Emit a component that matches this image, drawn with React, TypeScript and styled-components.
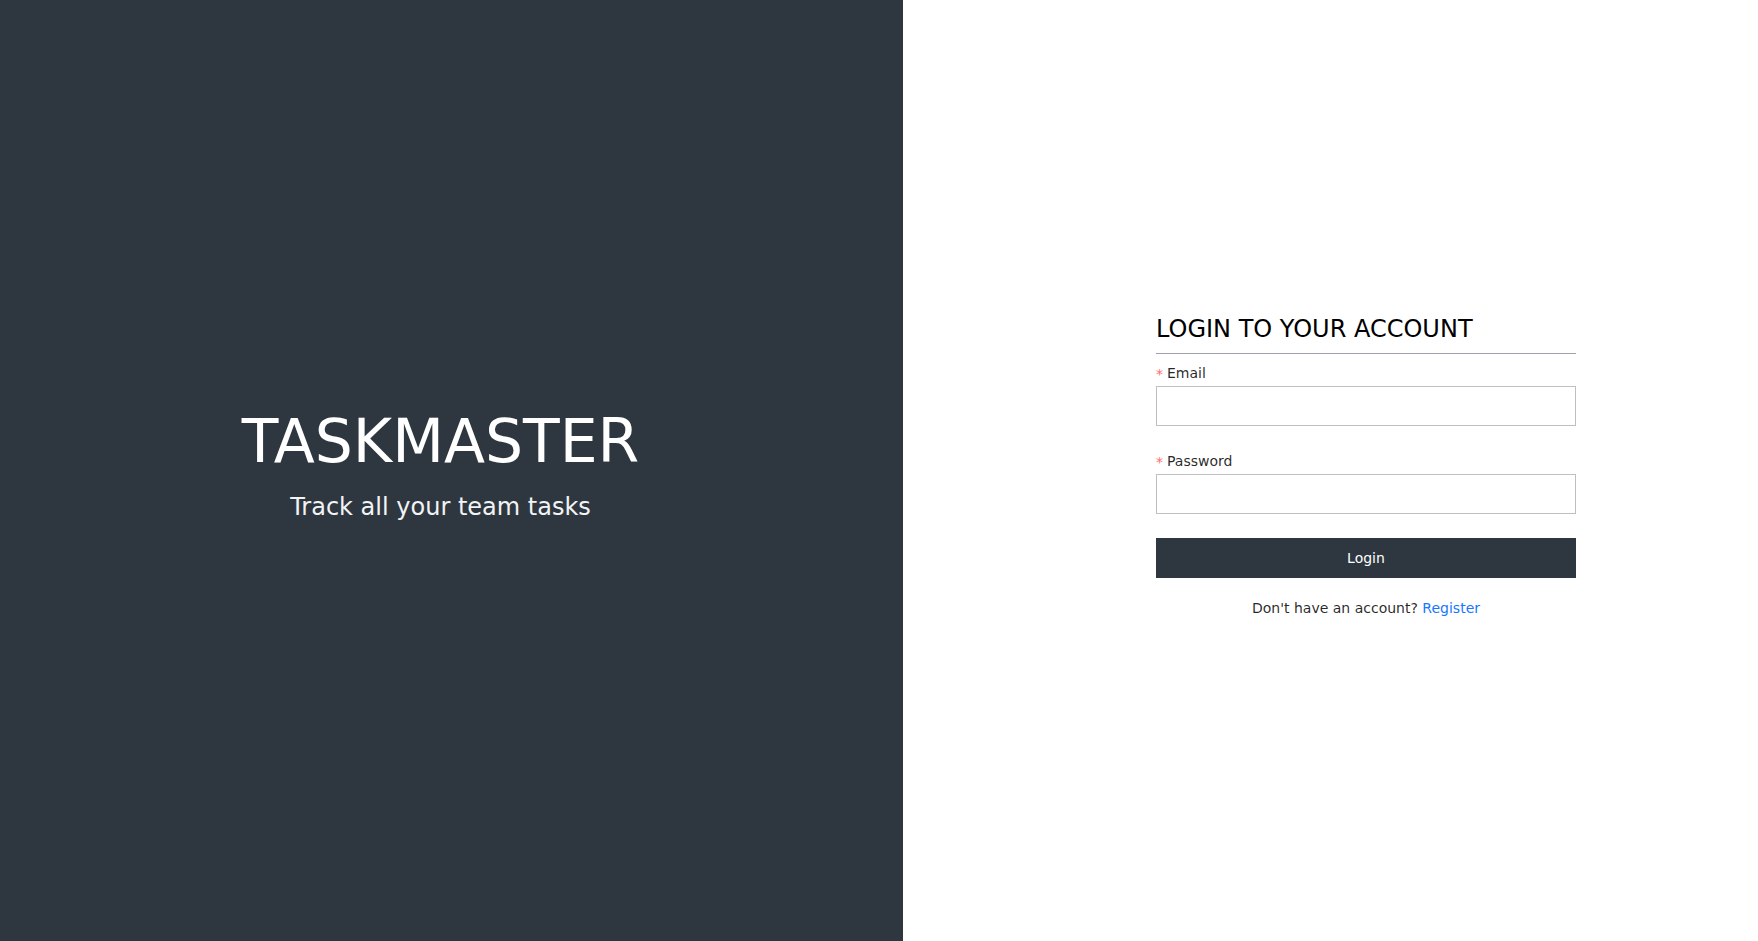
import React from "react";
import styled, { createGlobalStyle } from "styled-components";

const GlobalStyle = createGlobalStyle`
  html, body { margin: 0; padding: 0; }
  body {
    font-family: "DejaVu Sans", "Noto Sans", sans-serif;
    background: #ffffff;
  }
  * { box-sizing: border-box; }
`;

const Page = styled.div`
  display: grid;
  grid-template-columns: 903px 1fr;
  width: 1758px;
  height: 941px;
`;

const BrandPanel = styled.section`
  background: #2e3740;
  color: #ffffff;
  display: flex;
  flex-direction: column;
  align-items: center;
  justify-content: center;
  padding: 0 22px 12px 0;
`;

const BrandTitle = styled.h1`
  margin: 0;
  font-size: 60px;
  font-weight: 400;
  line-height: 72px;
  letter-spacing: 0;
`;

const BrandTagline = styled.p`
  margin: 12px 0 0;
  font-size: 24px;
  line-height: 36px;
  color: #f2f3f5;
`;

const FormPanel = styled.section`
  display: flex;
  flex-direction: column;
  justify-content: center;
  padding: 0 0 9px 253px;
`;

const Form = styled.form`
  width: 420px;
  display: flex;
  flex-direction: column;
`;

const Heading = styled.h2`
  margin: 0 0 8px;
  font-size: 24px;
  font-weight: 400;
  line-height: 32px;
  color: #000000;
`;

const Divider = styled.hr`
  margin: 0 0 8px;
  border: 0;
  height: 1px;
  background: #9ca1ac;
`;

const Field = styled.div`
  display: flex;
  flex-direction: column;
  margin-bottom: 24px;
`;

const Label = styled.label`
  font-size: 14px;
  line-height: 22px;
  color: rgba(0, 0, 0, 0.85);
  margin-bottom: 2px;
`;

const Required = styled.span`
  display: inline-block;
  color: #ff6b6b;
  margin-right: 4px;
  font-size: 14px;
  transform: translateY(1px);
`;

const Input = styled.input`
  height: 40px;
  width: 100%;
  border: 1px solid #bfbfbf;
  border-radius: 0;
  padding: 0 11px;
  font-size: 16px;
  font-family: inherit;
  outline: none;
  background: #ffffff;
`;

const SubmitButton = styled.button`
  height: 40px;
  width: 100%;
  border: 0;
  border-radius: 0;
  background: #2e3740;
  color: #ffffff;
  font-size: 14px;
  font-family: inherit;
  cursor: pointer;
`;

const Footer = styled.p`
  margin: 19px 0 0;
  font-size: 14px;
  line-height: 22px;
  color: rgba(0, 0, 0, 0.85);
  text-align: center;
`;

const Link = styled.a`
  color: #1677ff;
  text-decoration: none;
`;

export default function App() {
  return (
    <>
      <GlobalStyle />
      <Page>
        <BrandPanel>
          <BrandTitle>TASKMASTER</BrandTitle>
          <BrandTagline>Track all your team tasks</BrandTagline>
        </BrandPanel>
        <FormPanel>
          <Form onSubmit={(e) => e.preventDefault()}>
            <Heading>LOGIN TO YOUR ACCOUNT</Heading>
            <Divider />
            <Field>
              <Label htmlFor="email">
                <Required>*</Required>Email
              </Label>
              <Input id="email" type="email" />
            </Field>
            <Field>
              <Label htmlFor="password">
                <Required>*</Required>Password
              </Label>
              <Input id="password" type="password" />
            </Field>
            <SubmitButton type="submit">Login</SubmitButton>
            <Footer>
              Don't have an account? <Link href="#">Register</Link>
            </Footer>
          </Form>
        </FormPanel>
      </Page>
    </>
  );
}
